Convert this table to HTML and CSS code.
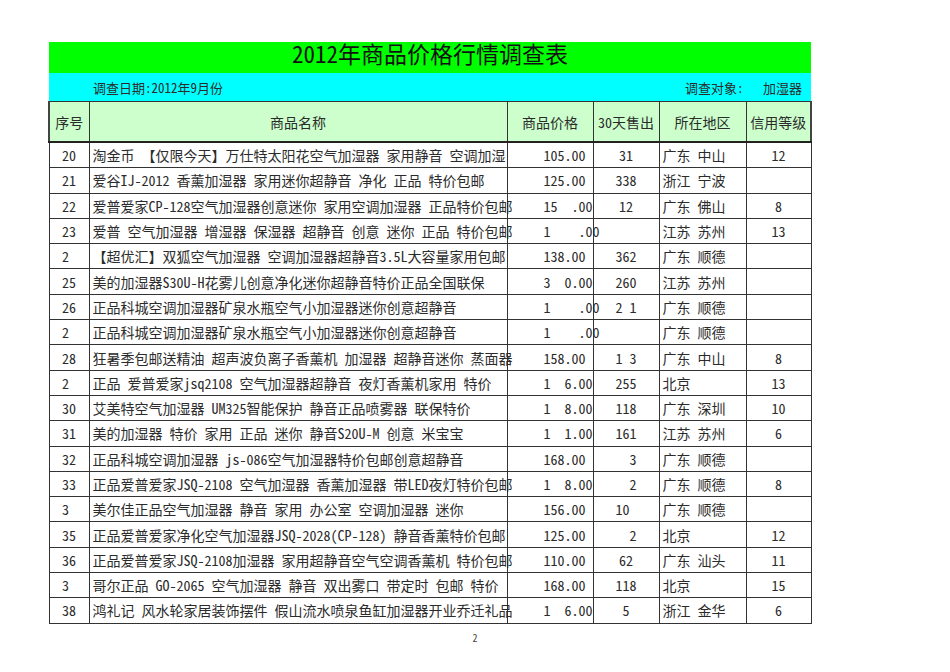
FILE: index.html
```html
<!DOCTYPE html>
<html lang="zh-CN">
<head>
<meta charset="utf-8">
<title>2012年商品价格行情调查表</title>
<link rel="stylesheet" href="styles.css">
</head>
<body>
<div class="wrap">
<table class="sheet">
  <colgroup>
    <col class="c-no"><col class="c-name"><col class="c-price"><col class="c-sold"><col class="c-loc"><col class="c-credit">
  </colgroup>
  <tr class="title-row"><td colspan="6">2012年商品价格行情调查表</td></tr>
  <tr class="info-row"><td colspan="6"><div class="info"><span>调查日期:2012年9月份</span><span>调查对象:&nbsp;&nbsp;&nbsp;加湿器</span></div></td></tr>
  <tr class="head-row">
    <th>序号</th><th>商品名称</th><th>商品价格</th><th>30天售出</th><th>所在地区</th><th>信用等级</th>
  </tr>
  <tr><td class="no">20</td><td class="name">淘金币 【仅限今天】万仕特太阳花空气加湿器 家用静音 空调加湿</td><td class="price">105.00</td><td class="sold">31</td><td class="loc">广东 中山</td><td class="credit">12</td></tr>
  <tr><td class="no">21</td><td class="name">爱谷IJ-2012 香薰加湿器 家用迷你超静音 净化 正品 特价包邮</td><td class="price">125.00</td><td class="sold">338</td><td class="loc">浙江 宁波</td><td class="credit"></td></tr>
  <tr><td class="no">22</td><td class="name">爱普爱家CP-128空气加湿器创意迷你 家用空调加湿器 正品特价包邮</td><td class="price">15  .00</td><td class="sold">12</td><td class="loc">广东 佛山</td><td class="credit">8</td></tr>
  <tr><td class="no">23</td><td class="name">爱普 空气加湿器 增湿器 保湿器 超静音 创意 迷你 正品 特价包邮</td><td class="price">1    .00</td><td class="sold"></td><td class="loc">江苏 苏州</td><td class="credit">13</td></tr>
  <tr><td class="no">2 </td><td class="name">【超优汇】双狐空气加湿器 空调加湿器超静音3.5L大容量家用包邮</td><td class="price">138.00</td><td class="sold">362</td><td class="loc">广东 顺德</td><td class="credit"></td></tr>
  <tr><td class="no">25</td><td class="name">美的加湿器S30U-H花雾儿创意净化迷你超静音特价正品全国联保</td><td class="price">3  0.00</td><td class="sold">260</td><td class="loc">江苏 苏州</td><td class="credit"></td></tr>
  <tr><td class="no">26</td><td class="name">正品科城空调加湿器矿泉水瓶空气小加湿器迷你创意超静音</td><td class="price">1    .00</td><td class="sold">2 1</td><td class="loc">广东 顺德</td><td class="credit"></td></tr>
  <tr><td class="no">2 </td><td class="name">正品科城空调加湿器矿泉水瓶空气小加湿器迷你创意超静音</td><td class="price">1    .00</td><td class="sold"></td><td class="loc">广东 顺德</td><td class="credit"></td></tr>
  <tr><td class="no">28</td><td class="name">狂暑季包邮送精油 超声波负离子香薰机 加湿器 超静音迷你 蒸面器</td><td class="price">158.00</td><td class="sold">1 3</td><td class="loc">广东 中山</td><td class="credit">8</td></tr>
  <tr><td class="no">2 </td><td class="name">正品 爱普爱家jsq2108 空气加湿器超静音 夜灯香薰机家用 特价</td><td class="price">1  6.00</td><td class="sold">255</td><td class="loc">北京</td><td class="credit">13</td></tr>
  <tr><td class="no">30</td><td class="name">艾美特空气加湿器 UM325智能保护 静音正品喷雾器 联保特价</td><td class="price">1  8.00</td><td class="sold">118</td><td class="loc">广东 深圳</td><td class="credit">10</td></tr>
  <tr><td class="no">31</td><td class="name">美的加湿器 特价 家用 正品 迷你 静音S20U-M 创意 米宝宝</td><td class="price">1  1.00</td><td class="sold">161</td><td class="loc">江苏 苏州</td><td class="credit">6</td></tr>
  <tr><td class="no">32</td><td class="name">正品科城空调加湿器 js-086空气加湿器特价包邮创意超静音</td><td class="price">168.00</td><td class="sold">  3</td><td class="loc">广东 顺德</td><td class="credit"></td></tr>
  <tr><td class="no">33</td><td class="name">正品爱普爱家JSQ-2108 空气加湿器 香薰加湿器 带LED夜灯特价包邮</td><td class="price">1  8.00</td><td class="sold">  2</td><td class="loc">广东 顺德</td><td class="credit">8</td></tr>
  <tr><td class="no">3 </td><td class="name">美尔佳正品空气加湿器 静音 家用 办公室 空调加湿器 迷你</td><td class="price">156.00</td><td class="sold">10 </td><td class="loc">广东 顺德</td><td class="credit"></td></tr>
  <tr><td class="no">35</td><td class="name">正品爱普爱家净化空气加湿器JSQ-2028(CP-128) 静音香薰特价包邮</td><td class="price">125.00</td><td class="sold">  2</td><td class="loc">北京</td><td class="credit">12</td></tr>
  <tr><td class="no">36</td><td class="name">正品爱普爱家JSQ-2108加湿器 家用超静音空气空调香薰机 特价包邮</td><td class="price">110.00</td><td class="sold">62</td><td class="loc">广东 汕头</td><td class="credit">11</td></tr>
  <tr><td class="no">3 </td><td class="name">哥尔正品 GO-2065 空气加湿器 静音 双出雾口 带定时 包邮 特价</td><td class="price">168.00</td><td class="sold">118</td><td class="loc">北京</td><td class="credit">15</td></tr>
  <tr><td class="no">38</td><td class="name">鸿礼记 风水轮家居装饰摆件 假山流水喷泉鱼缸加湿器开业乔迁礼品</td><td class="price">1  6.00</td><td class="sold">5</td><td class="loc">浙江 金华</td><td class="credit">6</td></tr>
</table>
</div>
<div class="pnum">2</div>
</body>
</html>
```
FILE: styles.css
```css
html, body {
  margin: 0;
  padding: 0;
  background: #ffffff;
}
body {
  font-family: "Noto Sans Mono CJK SC", "Noto Sans CJK SC", sans-serif;
  color: #2b2b2b;
}
.wrap {
  padding: 42px 0 0 48px;
}
.sheet {
  border-collapse: collapse;
  table-layout: fixed;
  width: 762px;
  font-size: 14px;
}
.c-no { width: 40px; }
.c-name { width: 418px; }
.c-price { width: 86px; }
.c-sold { width: 66px; }
.c-loc { width: 87px; }
.c-credit { width: 65px; }

.sheet td, .sheet th {
  padding: 0;
  white-space: pre;
  overflow: visible;
  font-weight: 400;
}
.title-row td {
  background: #00ff00;
  height: 31px;
  font-size: 23px;
  line-height: 22px;
  text-align: center;
  vertical-align: top;
  color: #111;
}
.info-row td {
  background: #00ffff;
  height: 28px;
  font-size: 13px;
}
.info {
  display: flex;
  justify-content: space-between;
  padding: 0 9px 0 44px;
}
.head-row th {
  background: #ccffcc;
  height: 39px;
  border: 1px solid #333;
  border-bottom: 2px solid #222;
  font-size: 14px;
  text-align: center;
  vertical-align: middle;
}
.sheet tr:not(.title-row):not(.info-row):not(.head-row) td {
  height: 24.3px;
  line-height: 18px;
  border: 1px solid #333;
  vertical-align: middle;
}
.sheet tr:last-child td {
  border-bottom: 2px solid #111;
}
.sheet td.no { text-align: center; border-left: 2px solid #444; }
.sheet th:first-child { border-left: 2px solid #444; }
.sheet th:last-child, .sheet td.credit { border-right: 2px solid #444; }
.sheet td.name { padding-left: 3px; }
.sheet td.price { padding-left: 36px; border-left-color: #777; }
.sheet td.sold { text-align: center; border-left-color: #777; }
.sheet td.loc { padding-left: 3px; }
.sheet td.credit { text-align: center; }
.pnum {
  text-align: center;
  font-size: 10px;
  line-height: 12px;
  color: #444;
  margin-top: 8px;
}
```
